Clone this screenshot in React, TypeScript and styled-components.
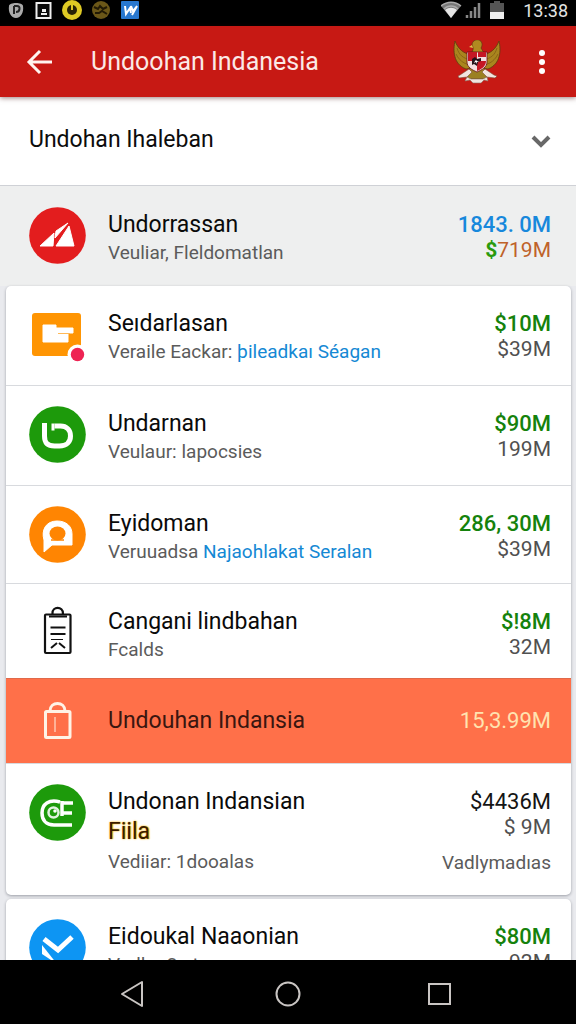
import React from "react";
import styled, { createGlobalStyle } from "styled-components";

const GlobalStyle = createGlobalStyle`
  * { box-sizing: border-box; }
  body { margin: 0; background: #000; font-family: Roboto, "Noto Sans", sans-serif; }
  button { border: 0; padding: 0; margin: 0; background: none; color: inherit; font: inherit; cursor: pointer; }
  svg { display: block; }
`;

const Screen = styled.div`
  display: flex;
  flex-direction: column;
  height: 100vh;
  overflow: hidden;
  background: #e9eaee;
`;

const StatusBar = styled.div`
  flex: none;
  display: flex;
  justify-content: space-between;
  height: 26px;
  padding: 0 8px;
  background: #000;
  color: #e4e4e4;
`;

const StatusGroup = styled.div`
  display: flex;
  align-items: flex-start;
  gap: 16px;
`;

const Clock = styled.span`
  font-size: 18px;
  line-height: 22px;
`;

const AppBar = styled.header`
  flex: none;
  display: flex;
  align-items: center;
  height: 71px;
  padding: 0 22px 0 24px;
  background: #c71914;
  color: #fff;
  box-shadow: 0 1px 5px rgba(60, 0, 0, 0.5);
  z-index: 1;
`;

const BarTitle = styled.h1`
  flex: 1;
  margin: 0 0 0 35px;
  font-size: 25px;
  line-height: 32px;
  font-weight: 400;
  color: #fbe9e7;
`;

const MenuButton = styled.button`
  margin-left: 28px;
`;

const Content = styled.main`
  flex: 1;
  min-height: 0;
  overflow: hidden;
`;

const Selector = styled.button`
  display: flex;
  align-items: center;
  justify-content: space-between;
  width: 100%;
  height: 89px;
  padding: 0 22px 2px 29px;
  background: #fff;
  border-bottom: 1px solid #cfd1d6;
  font-size: 23px;
  line-height: 28px;
  color: #0c0c0c;
`;

const Card = styled.ul`
  list-style: none;
  margin: 0 5px 4px 6px;
  padding: 0;
  overflow: hidden;
  background: #fff;
  border-radius: 5px;
  box-shadow: 0 1px 3px rgba(40, 44, 60, 0.4);
`;

const Row = styled.li<{ $height: number }>`
  display: flex;
  align-items: flex-start;
  min-height: ${(p) => p.$height}px;
  padding: 20px 20px 0 23px;
  & + & { border-top: 1px solid #d8dade; }
`;

const Summary = styled.section`
  display: flex;
  align-items: flex-start;
  min-height: 100px;
  padding: 21px 25px 0 29px;
  background: #eeefef;
`;

const ActiveRow = styled(Row)`
  align-items: center;
  padding-top: 0;
  background: #ff7049;
  && { border-top: 1px solid #e0694a; }
`;

const IconSlot = styled.div`
  flex: none;
  width: 57px;
  height: 57px;
  margin-right: 22px;
`;

const Body = styled.div`
  flex: 1;
  min-width: 0;
  padding-top: 4px;
`;

const Name = styled.div`
  font-size: 23px;
  line-height: 28px;
  color: #0a0a0a;
  white-space: nowrap;
`;

const ActiveName = styled(Name)`
  flex: 1;
  color: #3a1610;
`;

const Highlight = styled(Name)`
  line-height: 32px;
  color: #3a1c00;
  text-shadow: 0 0 2px #ffb300, 1px 0 1px #ffc94a;
`;

const Detail = styled.div`
  font-size: 19px;
  line-height: 27px;
  color: #5b5b5b;
  white-space: nowrap;
`;

const DetailLink = styled.a`
  color: #1488d4;
  text-decoration: none;
`;

const Figures = styled.div`
  padding-top: 5px;
  text-align: right;
  white-space: nowrap;
`;

const tones = {
  blue: "#1788dc",
  green: "#15820c",
  black: "#141414",
  cream: "#ffe3b0",
};

const Amount = styled.div<{ $tone: keyof typeof tones }>`
  font-size: 22px;
  line-height: 26px;
  font-weight: ${(p) => (p.$tone === "blue" || p.$tone === "green" ? 500 : 400)};
  color: ${(p) => tones[p.$tone]};
`;

const SubAmount = styled.div<{ $warm?: boolean }>`
  font-size: 21px;
  line-height: 25px;
  color: ${(p) => (p.$warm ? "#bf6229" : "#505050")};
`;

const Dollar = styled.b`
  color: #2a9a0c;
  font-weight: 700;
`;

const Footnote = styled(Detail)`
  padding-top: 9px;
`;

const NavBar = styled.nav`
  flex: none;
  display: flex;
  justify-content: center;
  align-items: center;
  gap: 120px;
  height: 64px;
  padding-top: 4px;
  background: #000;
  color: #c9c5c3;
`;

const NavButton = styled.button`
  width: 32px;
  height: 32px;
`;

const Garuda = () => (
  <svg width="50" height="44" viewBox="0 0 50 44" aria-label="Garuda emblem">
    <path d="M3 1C1 10 1 24 14 29l6-1V15C12 14 6 9 3 1z" fill="#a9851e" stroke="#5d3b10" strokeWidth=".8" />
    <path d="M47 1c2 9 2 23-11 28l-6-1V15c8-1 14-6 17-14z" fill="#a9851e" stroke="#5d3b10" strokeWidth=".8" />
    <path d="M5 8c2 7 6 10 13 12M4 14c3 6 7 9 13 11M45 8c-2 7-6 10-13 12M46 14c-3 6-7 9-13 11" stroke="#8a6517" fill="none" />
    <path d="M20 12c2-3 1-5 0-7 0-4 4-6 7-5 3 1 4 5 2 8l3 5z" fill="#b08a20" stroke="#5d3b10" strokeWidth=".7" />
    <path d="M20 5l-3 2 4 1z" fill="#e1c04d" />
    <path d="M18 27l-3 12h20l-3-12z" fill="#9b8022" stroke="#5d3b10" strokeWidth=".7" />
    <path d="M15 12h20v10c0 5-5 8-10 10-5-2-10-5-10-10z" fill="#f3dfe0" stroke="#651212" strokeWidth=".8" />
    <path d="M16 12h9v9h-9zM25 21h9c0 5-4 8-9 10z" fill="#c51724" />
    <path d="M26 12h8v5h-8z" fill="#c51724" />
    <path d="M20 19l3-2 2 2 4-1v3l-3 1-1 4-3-2-2 1z" fill="#24131b" />
    <path d="M24 20l1 1h2l-2 1v2l-1-2-2 1 1-2z" fill="#fff" />
    <path d="M17 29L8 35l-2 1 1 2 8-1 5-5zM33 29l9 6 3 1-2 2-8-1-5-5z" fill="#f2e4df" stroke="#794d36" strokeWidth=".6" />
    <path d="M15 37l4 2h12l4-2 1 4-4-1-3 3h-8l-3-3-5 1z" fill="#f0e4df" stroke="#8b6d62" strokeWidth=".6" />
  </svg>
);

const Circle = ({ fill, children }: { fill: string; children: React.ReactNode }) => (
  <svg width="57" height="57" viewBox="0 0 57 57" aria-hidden="true">
    <circle cx="28.5" cy="28.5" r="28.3" fill={fill} />
    {children}
  </svg>
);

const SailIcon = () => (
  <Circle fill="#e31d1e">
    <path d="M11 39L25 26l-1 13zM27 24l12-8-13 15zM27 39L40 19l5 20z" fill="#fff" stroke="#fff" strokeWidth="1" strokeLinejoin="round" />
  </Circle>
);

const FolderIcon = () => (
  <svg width="57" height="57" viewBox="0 0 57 57" aria-hidden="true">
    <rect x="3" y="7" width="49" height="43" rx="3" fill="#ff9503" />
    <path d="M14 19h13v3h17v5h-5v9H14z" fill="#fff" stroke="#fff" strokeLinejoin="round" />
    <path d="M29 27.500h12" stroke="#ffb957" strokeWidth="1" />
    <circle cx="48.500" cy="48.500" r="10" fill="#fff" />
    <circle cx="48.500" cy="48.500" r="6.700" fill="#ee2353" />
  </svg>
);

const LoopIcon = () => (
  <Circle fill="#1d9a0b">
    <path d="M15.500 17v13c0 7 3 10 10 10h5c7 0 11-4 11-10s-4-10-10-10h-6" fill="none" stroke="#fff" strokeWidth="5" strokeLinejoin="round" />
    <path d="M24 17.500v7" stroke="#fff" strokeWidth="3" />
  </Circle>
);

const ChatIcon = () => (
  <Circle fill="#ff8502">
    <path d="M15 46V34c-3-10 2-19 13-19 9 0 15 5 15 13v11H23z" fill="#fff" stroke="#fff" strokeLinejoin="round" />
    <ellipse cx="28.500" cy="27.500" rx="8" ry="7" fill="#ff8502" />
    <path d="M22 34h13" stroke="#ff8502" strokeWidth="1.500" />
  </Circle>
);

const ClipboardIcon = () => (
  <svg width="57" height="57" viewBox="0 0 57 57" fill="none" stroke="#111" strokeWidth="2.200" aria-hidden="true">
    <rect x="16" y="10.500" width="25.500" height="38.500" rx="1" />
    <path d="M20 12.500h18M23.500 10V9a5.200 5.200 0 0 1 10.400 0v1" />
    <path d="M21.500 23.500h15M21.500 30h15" />
    <path d="M22 35.500h12" strokeWidth="1" />
    <path d="M28 39l-6 5M30 39l6 5" strokeWidth="2" />
  </svg>
);

const BagIcon = () => (
  <svg width="57" height="57" viewBox="0 0 57 57" fill="none" stroke="#fff3e6" strokeWidth="3" aria-hidden="true">
    <rect x="16.500" y="18.500" width="24.500" height="26" rx="1" />
    <path d="M21 18c0-10 15-10 15 0" />
    <path d="M26 24v15" strokeWidth="1" />
  </svg>
);

const MonogramIcon = () => (
  <Circle fill="#1d9a0b">
    <path d="M31 18c-11-3-18 2-18 11 0 7 4 12 12 12h18M33 17v15M34 19h10M34 29h9" fill="none" stroke="#fff" strokeWidth="3.500" />
    <circle cx="24.500" cy="28.500" r="5" fill="none" stroke="#e1f2df" strokeWidth="2.500" />
    <circle cx="26" cy="27" r="1.800" fill="#fff" />
  </Circle>
);

const CheckIcon = () => (
  <Circle fill="#0d95f3">
    <path d="M15 20l14 11 14-13" fill="none" stroke="#fff" strokeWidth="5" />
    <path d="M13 26l15 19-15-10z" fill="#fff" />
  </Circle>
);

type Entry = {
  icon: React.ReactNode;
  name: string;
  detail: string;
  link?: string;
  amount: string;
  sub: string;
  height: number;
};

const entries: Entry[] = [
  { icon: <FolderIcon />, name: "Seıdarlasan", detail: "Veraile Eackar:", link: "þileadkaı Séagan", amount: "$10M", sub: "$39M", height: 99 },
  { icon: <LoopIcon />, name: "Undarnan", detail: "Veulaur: lapocsies", amount: "$90M", sub: "199M", height: 100 },
  { icon: <ChatIcon />, name: "Eyidoman", detail: "Veruuadsa", link: "Najaohlakat Seralan", amount: "286, 30M", sub: "$39M", height: 98 },
  { icon: <ClipboardIcon />, name: "Cangani lindbahan", detail: "Fcalds", amount: "$!8M", sub: "32M", height: 95 },
];

const EntryRow = ({ entry }: { entry: Entry }) => (
  <Row $height={entry.height}>
    <IconSlot>{entry.icon}</IconSlot>
    <Body>
      <Name>{entry.name}</Name>
      <Detail>
        {entry.detail} {entry.link && <DetailLink href="#">{entry.link}</DetailLink>}
      </Detail>
    </Body>
    <Figures>
      <Amount $tone="green">{entry.amount}</Amount>
      <SubAmount>{entry.sub}</SubAmount>
    </Figures>
  </Row>
);

export default function App() {
  return (
    <Screen>
      <GlobalStyle />
      <StatusBar>
        <StatusGroup>
          <svg width="136" height="22" viewBox="0 0 136 22" aria-hidden="true">
            <path d="M1 6c0-4 14-4 14 0 1 6-2 12-7 12S0 12 1 6z" fill="#aaa" />
            <path d="M6 6v8M6 6h3c4 0 3 6-1 6" fill="none" stroke="#222" strokeWidth="2" />
            <rect x="28.500" y="3" width="14" height="15" fill="#0b0b0b" stroke="#eee" strokeWidth="2" />
            <path d="M34 9h4v3h-4zM33 13h6v2h-6z" fill="#eee" />
            <circle cx="64" cy="10" r="10" fill="#dfca24" />
            <circle cx="64" cy="10" r="5" fill="#292306" />
            <path d="M64 4v6" stroke="#dfca24" strokeWidth="2" />
            <circle cx="93" cy="10" r="9" fill="#6b5718" />
            <path d="M86 7l4 2 2-3 3 3 4-2M87 13h4l3-2 5 3" fill="none" stroke="#221a05" strokeWidth="2" />
            <rect x="113" y="1" width="18" height="18" rx="1" fill="#2878d0" />
            <path d="M117 6l1 8 4-6 1 5M123 6l2 5 4-5-5 9" fill="none" stroke="#fff" strokeWidth="2" />
          </svg>
        </StatusGroup>
        <StatusGroup>
          <svg width="66" height="22" viewBox="0 0 66 22" aria-hidden="true">
            <path d="M0 6c6-5 14-5 20 0L10 18z" fill="#777" />
            <path d="M0 6c6-5 14-5 20 0M3 9c4-4 10-4 14 0" stroke="#aaa" strokeWidth="1.500" fill="none" />
            <path d="M4 10c4-3 8-3 12 0l-6 8z" fill="#e5e5e5" />
            <path d="M26 18v-3M30 18v-7M34 18V7M38 18V3" stroke="#888" strokeWidth="2.500" />
            <path d="M49 3h4V1h6v2h4v15H49z" fill="#555" />
            <path d="M49 12h14v7H49z" fill="#eee" />
          </svg>
          <Clock>13:38</Clock>
        </StatusGroup>
      </StatusBar>
      <AppBar>
        <button aria-label="Back">
          <svg width="32" height="32" viewBox="0 0 32 32" fill="none" stroke="#fff4ef" strokeWidth="3">
            <path d="M28 16H6M16 5L5 16l11 11" />
          </svg>
        </button>
        <BarTitle>Undoohan Indanesia</BarTitle>
        <Garuda />
        <MenuButton aria-label="More options">
          <svg width="24" height="32" viewBox="0 0 24 32" fill="#fff">
            <circle cx="12" cy="7" r="3" />
            <circle cx="12" cy="16" r="3" />
            <circle cx="12" cy="25" r="3" />
          </svg>
        </MenuButton>
      </AppBar>
      <Content>
        <Selector>
          Undohan Ihaleban
          <svg width="26" height="24" viewBox="0 0 26 24" fill="none" stroke="#686868" strokeWidth="4">
            <path d="M5 9l8 8 8-8" />
          </svg>
        </Selector>
        <Summary>
          <IconSlot><SailIcon /></IconSlot>
          <Body>
            <Name>Undorrassan</Name>
            <Detail>Veuliar, Fleldomatlan</Detail>
          </Body>
          <Figures>
            <Amount $tone="blue">1843. 0M</Amount>
            <SubAmount $warm><Dollar>$</Dollar>719M</SubAmount>
          </Figures>
        </Summary>
        <Card>
          {entries.map((entry) => (
            <EntryRow key={entry.name} entry={entry} />
          ))}
          <ActiveRow $height={85}>
            <IconSlot><BagIcon /></IconSlot>
            <ActiveName>Undouhan Indansia</ActiveName>
            <Amount $tone="cream">15,3.99M</Amount>
          </ActiveRow>
          <Row $height={132}>
            <IconSlot><MonogramIcon /></IconSlot>
            <Body>
              <Name>Undonan Indansian</Name>
              <Highlight>Fiila</Highlight>
              <Detail>Vediiar: 1dooalas</Detail>
            </Body>
            <Figures>
              <Amount $tone="black">$4436M</Amount>
              <SubAmount>$ 9M</SubAmount>
              <Footnote>Vadlymadıas</Footnote>
            </Figures>
          </Row>
        </Card>
        <Card>
          <EntryRow
            entry={{ icon: <CheckIcon />, name: "Eidoukal Naaonian", detail: "Vadlar 2 atn", amount: "$80M", sub: "92M", height: 99 }}
          />
        </Card>
      </Content>
      <NavBar>
        <NavButton aria-label="Back">
          <svg width="32" height="32" viewBox="0 0 32 32" fill="none" stroke="currentColor" strokeWidth="2" strokeLinejoin="round">
            <path d="M22 4v24L2 16z" />
          </svg>
        </NavButton>
        <NavButton aria-label="Home">
          <svg width="32" height="32" viewBox="0 0 32 32" fill="none" stroke="currentColor" strokeWidth="2">
            <circle cx="16" cy="16" r="11.500" />
          </svg>
        </NavButton>
        <NavButton aria-label="Recent apps">
          <svg width="32" height="32" viewBox="0 0 32 32" fill="none" stroke="currentColor" strokeWidth="2">
            <rect x="5" y="6" width="21" height="20" />
          </svg>
        </NavButton>
      </NavBar>
    </Screen>
  );
}
